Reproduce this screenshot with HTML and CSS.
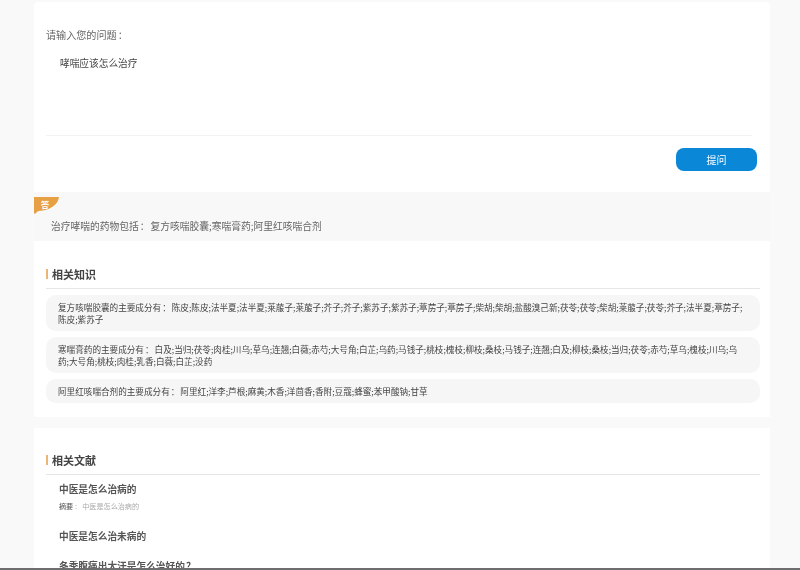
FILE: index.html
```html
<!DOCTYPE html>
<html lang="zh">
<head>
<meta charset="utf-8">
<title>提问</title>
<link rel="stylesheet" href="styles.css">
</head>
<body>
<main class="page">
  <section class="card ask">
    <div class="ask-label">请输入您的问题<span class="colon">：</span></div>
    <div class="ask-input">哮喘应该怎么治疗</div>
    <div class="ask-actions"><button class="ask-btn">提问</button></div>
  </section>
  <section class="answer">
    <div class="answer-tag">答</div>
    <p class="answer-text">治疗哮喘的药物包括<span class="colon">：</span>复方咳喘胶囊;寒喘膏药;阿里红咳喘合剂</p>
  </section>
  <section class="card knowledge">
    <h2 class="sec-title">相关知识</h2>
    <div class="know-list">
      <p class="know-item">复方咳喘胶囊的主要成分有<span class="colon">：</span>陈皮;陈皮;法半夏;法半夏;莱菔子;莱菔子;芥子;芥子;紫苏子;紫苏子;葶苈子;葶苈子;柴胡;柴胡;盐酸溴己新;茯苓;茯苓;柴胡;莱菔子;茯苓;芥子;法半夏;葶苈子;陈皮;紫苏子</p>
      <p class="know-item">寒喘膏药的主要成分有<span class="colon">：</span>白及;当归;茯苓;肉桂;川乌;草乌;连翘;白薇;赤芍;大号角;白芷;乌药;马钱子;桃枝;槐枝;柳枝;桑枝;马钱子;连翘;白及;柳枝;桑枝;当归;茯苓;赤芍;草乌;槐枝;川乌;乌药;大号角;桃枝;肉桂;乳香;白薇;白芷;没药</p>
      <p class="know-item">阿里红咳喘合剂的主要成分有<span class="colon">：</span>阿里红;洋李;芦根;麻黄;木香;洋茴香;香附;豆蔻;蜂蜜;苯甲酸钠;甘草</p>
    </div>
  </section>
  <section class="card literature">
    <h2 class="sec-title">相关文献</h2>
    <div class="lit-list">
      <h3 class="lit-title">中医是怎么治病的</h3>
      <p class="lit-abs"><b>摘要</b><span class="colon">：</span>中医是怎么治病的</p>
      <h3 class="lit-title">中医是怎么治未病的</h3>
      <h3 class="lit-title">冬季腹痛出大汗是怎么治好的<span class="colon">？</span></h3>
    </div>
  </section>
</main>
<div class="edge"></div>
</body>
</html>
```
FILE: styles.css
```css
* { box-sizing: border-box; }
html, body { margin: 0; height: 570px; overflow: hidden; }
body {
  background: #f9f9f9;
  color: #555;
  font-family: "Noto Sans CJK SC", "Liberation Sans", sans-serif;
  text-spacing-trim: space-all;
  filter: blur(0.35px);
}
.colon { font-family: "Noto Sans CJK TC", sans-serif; margin: 0 1px; }
.page { width: 736px; margin-left: 34px; padding-top: 2px; }
.card { background: #fff; }
.ask { height: 190px; padding: 26px 13px 0 12px; border-radius: 4px 4px 0 0; }
.ask-label { font-size: 10.1px; line-height: 14px; color: #666; }
.ask-input {
  height: 80px; margin: 14px 5px 0 0; padding-left: 14px;
  font-size: 9.7px; line-height: 14px; color: #444;
  border-bottom: 1px solid #f3f3f3;
}
.ask-actions { display: flex; justify-content: flex-end; margin-top: 12px; }
.ask-btn {
  width: 81px; height: 23px; padding: 0; border: 0; border-radius: 8px;
  background: #0b87d8; color: #fff; font: 10px/23px "Noto Sans CJK SC", sans-serif;
}
.answer { position: relative; height: 49px; padding: 26px 0 0 17px; background: #f8f8f8; }
.answer-tag {
  position: absolute; left: 0; top: 5px; width: 25px; height: 17px;
  background: #e8a045; color: #fff; font-size: 8.5px; font-weight: 700; line-height: 14px;
  text-align: center; padding-right: 3px;
  clip-path: path("M0 0H25C24 6 20 10 13 12.500C9 13.500 5 14 3.500 14.500L1 17L0 16Z");
}
.answer-text { margin: 0; font-size: 9.75px; line-height: 16px; color: #666; }
.knowledge { height: 176px; padding: 25px 10px 0 12px; }
.sec-title {
  margin: 0; padding: 0 0 6px 6px; height: 23px;
  font-size: 11px; line-height: 16px; font-weight: 700; color: #444;
  border-bottom: 1px solid #e6e6e6; position: relative;
}
.sec-title::before {
  content: ""; position: absolute; left: 0; top: 3px; width: 2px; height: 10px; background: #eab676;
}
.know-list { display: flex; flex-direction: column; gap: 6px; margin-top: 6px; }
.know-item {
  margin: 0; padding: 5.5px 14px 5.5px 12px; background: #f6f6f6; border-radius: 10px;
  font-size: 8.6px; line-height: 12.5px; color: #444;
}
.literature { margin-top: 11px; height: 142px; padding: 24px 10px 0 12px; }
.lit-list { padding: 7px 0 0 13px; }
.lit-title { margin: 0; font-size: 9.7px; line-height: 14px; font-weight: 700; color: #555; }
.lit-abs { margin: 5px 0 17px; font-size: 7.1px; line-height: 11px; color: #aaa; }
.lit-abs b { color: #555; font-weight: 400; }
.lit-title + .lit-title { margin-top: 16px; }
.edge { position: fixed; left: 0; right: 0; bottom: 0; height: 2px; background: #6e6e6e; }
```
